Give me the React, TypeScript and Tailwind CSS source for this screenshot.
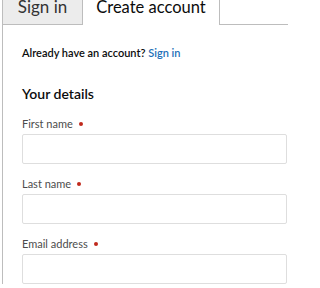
import type { ReactNode } from 'react'

function Field({ label }: { label: string }) {
  return (
    <div className="flex flex-col">
      <label className="flex items-center text-[11px] leading-[16px] text-[#4c4c4c]">
        {label}
        <span className="ml-[6px] inline-block h-[4px] w-[4px] rounded-full bg-[#c0291c]" />
      </label>
      <div className="mt-[2px] h-[30px] w-[265px] rounded-[2px] border border-[#dedede] bg-white" />
    </div>
  )
}

function Tab({ children, selected, className }: { children: ReactNode; selected?: boolean; className?: string }) {
  return (
    <li
      className={
        selected
          ? `-mb-px h-[35px] whitespace-nowrap border-t border-r border-[#bdbdbd] bg-white pt-[4px] text-center leading-[24px] text-[#0b0c0c] ${className ?? ''}`
          : `h-[34px] whitespace-nowrap border-t border-l border-r border-[#bdbdbd] bg-[#ececec] pt-[4px] text-center leading-[24px] text-[#333] ${className ?? ''}`
      }
    >
      {children}
    </li>
  )
}

export default function App() {
  return (
    <div className="h-[288px] w-[288px] overflow-hidden bg-white font-['Lato',sans-serif]">
      <div className="-mt-[10px] pl-[2px]">
        <ul className="flex w-[320px] border-b border-[#bdbdbd] text-[17px]">
          <Tab className="w-[81px]">Sign in</Tab>
          <Tab selected className="w-[137px] text-[16.5px]">Create account</Tab>
        </ul>
        <div className="w-[320px] border-l border-[#bdbdbd] px-[19px] pt-[20px]">
          <p className="text-[11px] font-semibold leading-[16px] text-[#0b0c0c]">
            Already have an account? <a className="text-[#1d70b8]">Sign in</a>
          </p>
          <h2 className="mt-[23px] text-[14px] font-semibold leading-[20px] text-[#0b0c0c]">Your details</h2>
          <div className="mt-[12px] flex flex-col gap-[12px]">
            <Field label="First name" />
            <Field label="Last name" />
            <Field label="Email address" />
          </div>
        </div>
      </div>
    </div>
  )
}
